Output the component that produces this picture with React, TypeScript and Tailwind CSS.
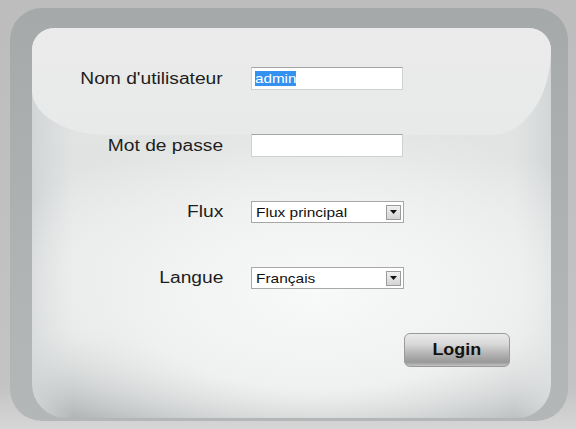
const labelCls =
  'inline-block origin-right scale-x-[1.2] text-[16px] leading-none text-[#1e1e1e]';

const Label = (props: { text: string }) => (
  <div className="flex h-[22px] items-center justify-end">
    <span className={labelCls}>{props.text}</span>
  </div>
);

const TextBox = (props: { selected?: string }) => (
  <div className="flex h-[23px] w-[152px] items-center border border-[#cfd1d1] border-t-[#a3a5a5] bg-white pl-[3px] text-[13px] leading-none">
    {props.selected && (
      <span className="inline-block origin-left scale-x-[1.17] bg-[#3392f0] leading-[15px] text-white">
        {props.selected}
      </span>
    )}
  </div>
);

const SelectBox = (props: { value: string }) => (
  <div className="flex h-[22px] w-[153px] items-center justify-between border border-[#a8a8a8] bg-white pl-[4px] pr-[2px] text-[13px] leading-none text-[#111]">
    <span className="inline-block origin-left scale-x-[1.19]">{props.value}</span>
    <div className="flex h-[15px] w-[15px] items-center justify-center border border-[#9b9b9b] bg-[linear-gradient(to_bottom,#f0f0f0,#d4d4d4)]">
      <svg width="7" height="4" viewBox="0 0 7 4">
        <path d="M0 0 L7 0 L3.5 4 Z" fill="#111" />
      </svg>
    </div>
  </div>
);

export default function App() {
  return (
    <div
      className="h-[429px] w-[576px] overflow-hidden bg-[linear-gradient(to_bottom,#bdbdbd,#c3c3c3_90%,#d6d6d6)] pl-[10px] pt-[8px]"
      style={{ fontFamily: '"Liberation Sans", Arial, sans-serif' }}
    >
      <div className="h-[413px] w-[558px] rounded-[32px] bg-[linear-gradient(to_bottom,#a5a9aa,#afb3b4_60%,#b3b7b8)] pl-[22px] pr-[17px] pt-[20px]">
        <div className="relative h-[390px] overflow-hidden rounded-t-[22px] rounded-b-[34px] bg-[radial-gradient(ellipse_65%_45%_at_55%_68%,#f8f9f9_0%,#eff0f0_55%,rgba(239,240,240,0)_100%),linear-gradient(to_right,#d2d5d6_0%,rgba(220,223,223,0)_8%,rgba(220,223,223,0)_93%,#d3d6d7_100%),linear-gradient(to_bottom,#e4e6e6_0%,#e1e3e3_35%,#e8eaea_60%,#e2e4e4_78%,#b3b7b8_100%)]">
          <div className="absolute inset-x-0 top-0 h-[107px] rounded-bl-[75px_45px] rounded-br-[60px_85px] bg-[linear-gradient(to_bottom,#ebebeb,#e8e9e9)]" />
          <div className="relative grid grid-cols-[191px_153px] items-center gap-x-[28px] gap-y-[44px] pt-[39px]">
            <Label text="Nom d'utilisateur" />
            <TextBox selected="admin" />
            <Label text="Mot de passe" />
            <TextBox />
            <Label text="Flux" />
            <SelectBox value="Flux principal" />
            <Label text="Langue" />
            <SelectBox value="Français" />
          </div>
          <div className="relative ml-[372px] mt-[44px] flex h-[34px] w-[106px] items-center justify-center rounded-[6px] border border-[#9a9a9a] bg-[linear-gradient(to_bottom,#e9e9e9_0%,#dadada_30%,#b0b0b0_65%,#999999_88%,#c2c2c2_100%)] text-[16px] font-bold leading-none text-[#111]">
            <span className="inline-block scale-x-[1.12]">Login</span>
          </div>
        </div>
      </div>
    </div>
  );
}
